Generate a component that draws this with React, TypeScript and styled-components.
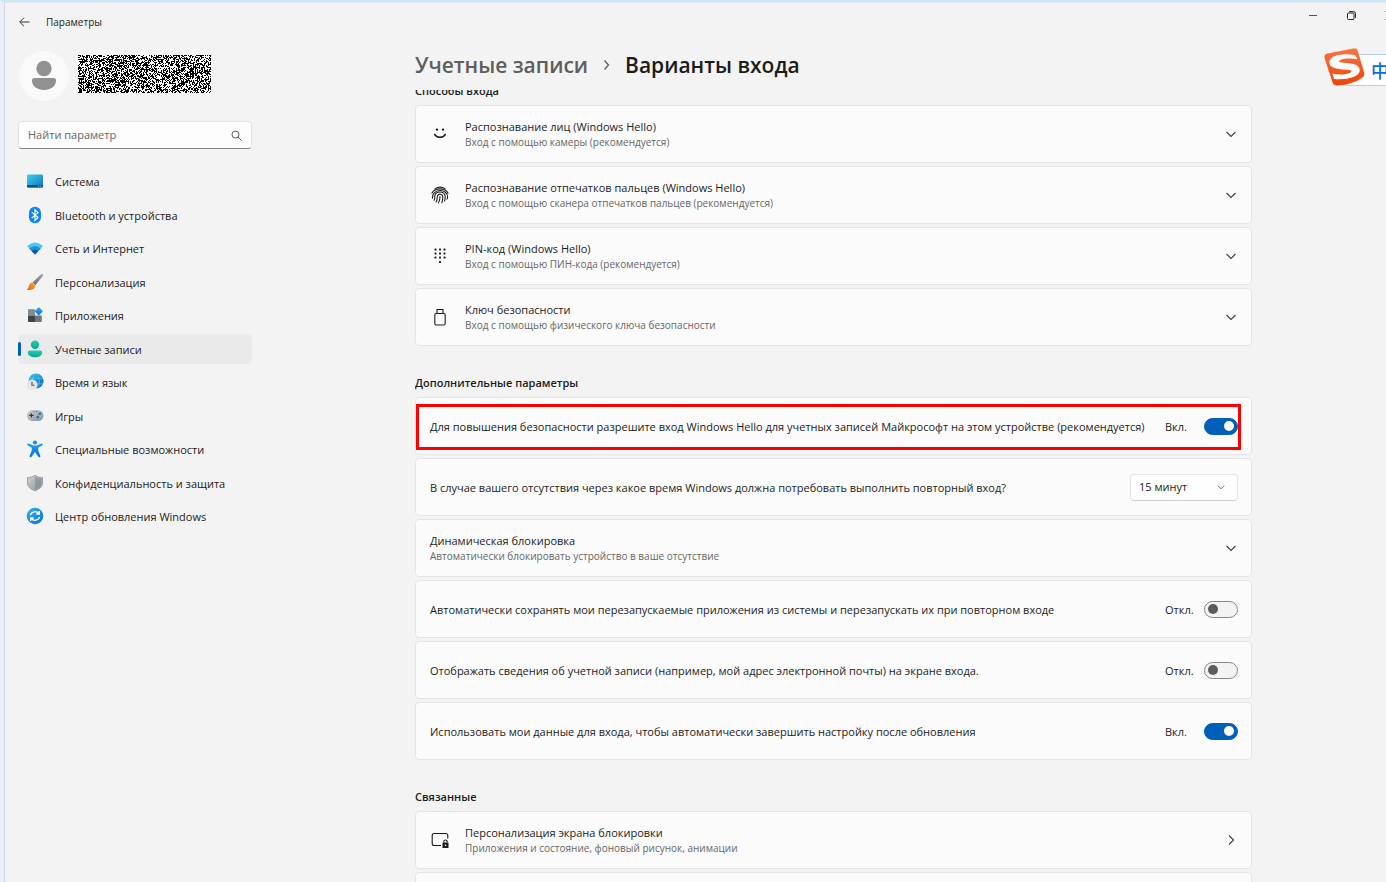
import React, { ReactNode } from 'react';
import styled, { createGlobalStyle } from 'styled-components';

const GlobalStyle = createGlobalStyle`
  *, *::before, *::after { box-sizing: border-box; }
  body { margin: 0; background: #f3f3f3; overflow: hidden; }
  body, button, input, select {
    font-family: "Open Sans", "Noto Sans", sans-serif;
    font-size: 11px;
    line-height: 16px;
    color: #1b1b1b;
  }
  button { background: none; border: 0; padding: 0; margin: 0; text-align: left; }
  h1, h2, p, ul { margin: 0; padding: 0; }
  svg { display: block; flex: none; }
`;

const Window = styled.div`
  position: relative;
  display: flex;
  flex-direction: column;
  height: 100vh;
  overflow: hidden;
  border-top: 2px solid #c9e5f7;
  border-left: 4px solid #ebf0f8;
  background: #f3f3f3;
`;

const Frame = styled.div`
  display: flex;
  flex-direction: column;
  flex: 1;
  min-height: 0;
  border-top: 1px solid #e3e6e9;
  border-left: 1px solid #cdd5e0;
`;

const TitleBar = styled.header`
  display: flex;
  justify-content: space-between;
  flex: none;
  height: 38px;
  overflow: hidden;
`;

const TitleGroup = styled.div`
  display: flex;
  align-items: center;
  gap: 15px;
  padding-left: 13px;
  font-size: 10px;
`;

const Controls = styled.div`
  display: flex;
  height: 24px;
  margin-right: -22px;
`;

const ControlButton = styled.button`
  display: grid;
  place-items: center;
  width: 38px;
`;

const Columns = styled.div`
  display: flex;
  flex: 1;
  min-height: 0;
`;

const Sidebar = styled.aside`
  flex: none;
  width: 247px;
  padding: 10px 0 0 13px;
`;

const Account = styled.div`
  display: flex;
  align-items: center;
  gap: 9px;
  height: 50px;
  padding-left: 1px;
`;

const NamePatch = styled.svg`
  margin-bottom: 4px;
`;

const Search = styled.label`
  display: flex;
  align-items: center;
  height: 28px;
  margin-top: 20px;
  padding: 0 9px;
  border: 1px solid #e3e3e3;
  border-bottom-color: #868686;
  border-radius: 4px;
  background: #fdfdfd;
`;

const SearchInput = styled.input`
  flex: 1;
  min-width: 0;
  padding: 0;
  border: 0;
  outline: 0;
  background: none;
  &::placeholder { color: #666; opacity: 1; }
`;

const NavList = styled.ul`
  display: flex;
  flex-direction: column;
  justify-content: space-between;
  height: 365px;
  margin-top: 17px;
  list-style: none;
`;

const NavLink = styled.a<{ $active?: boolean }>`
  display: flex;
  align-items: center;
  height: 30px;
  padding-left: ${p => (p.$active ? 0 : 3)}px;
  border-radius: 4px;
  color: inherit;
  text-decoration: none;
  background: ${p => (p.$active ? '#eaeaea' : 'transparent')};
  & > svg { margin: 0 11px 0 5px; }
`;

const NavLabel = styled.span`
  padding-top: 2px;
`;

const ActiveMark = styled.span`
  width: 3px;
  height: 14px;
  border-radius: 2px;
  background: #005fb8;
`;

const Main = styled.main`
  display: flex;
  flex-direction: column;
  flex: 1;
  min-width: 0;
  padding: 8px 134px 0 163px;
`;

const Breadcrumb = styled.h1`
  display: flex;
  align-items: center;
  gap: 15px;
  flex: none;
  height: 32px;
  font-size: 21px;
  line-height: 32px;
  font-weight: 600;
`;

const CrumbLink = styled.a`
  color: #5e5e5e;
  text-decoration: none;
`;

const Scroller = styled.div`
  flex: 1;
  min-height: 0;
  margin-top: 9px;
  overflow: hidden;
`;

const ScrolledContent = styled.div`
  margin-top: -7px;
`;

const Section = styled.section`
  margin-bottom: 29px;
`;

const SectionTitle = styled.h2`
  padding-bottom: 6px;
  font-size: 11px;
  line-height: 16px;
  font-weight: 600;
`;

const CardList = styled.div`
  display: flex;
  flex-direction: column;
  gap: 3px;
`;

const cardStyles = `
  position: relative;
  display: flex;
  align-items: center;
  width: 100%;
  min-height: 58px;
  padding: 0 13px 0 14px;
  border: 1px solid #e5e5e5;
  border-radius: 4px;
  background: #fbfbfb;
`;
const Card = styled.div`${cardStyles}`;
const CardButton = styled.button`${cardStyles}`;

const CardIcon = styled.span`
  display: grid;
  place-items: center;
  width: 20px;
  margin-right: 15px;
`;

const CardText = styled.span`
  display: flex;
  flex-direction: column;
  flex: 1;
  min-width: 0;
`;

const Title = styled.span`
  line-height: 16px;
`;

const Subtitle = styled.span`
  font-size: 10px;
  line-height: 14px;
  color: #666;
`;

const CardLabel = styled.label`
  flex: 1;
  padding-top: 2px;
  white-space: nowrap;
`;

const Status = styled.span`
  width: 39px;
  padding-top: 2px;
`;

const Toggle = styled.input`
  appearance: none;
  display: flex;
  align-items: center;
  width: 34px;
  height: 17px;
  margin: 0;
  padding: 0 3px;
  border: 1px solid #868686;
  border-radius: 9px;
  background: #f3f3f3;
  &::before {
    content: "";
    width: 10px;
    height: 10px;
    border-radius: 50%;
    background: #5c5c5c;
  }
  &:checked {
    justify-content: flex-end;
    border-color: #005fb8;
    background: #005fb8;
  }
  &:checked::before { background: #fff; }
`;

const SelectBox = styled.span`
  display: grid;
  align-items: center;
  width: 108px;
  & > * { grid-area: 1 / 1; }
  & > svg { justify-self: end; margin-right: 12px; pointer-events: none; }
`;

const Select = styled.select`
  appearance: none;
  width: 100%;
  height: 27px;
  padding: 0 8px;
  border: 1px solid #e3e3e3;
  border-bottom-color: #cfcfcf;
  border-radius: 4px;
  background: #fefefe;
`;

const Highlight = styled.span`
  position: absolute;
  inset: 6px 10px 4px 0;
  border: 3px solid #f00;
  pointer-events: none;
`;

const InputMethod = styled.div`
  position: absolute;
  top: 46px;
  right: 0;
  display: flex;
  align-items: flex-end;
  width: 62px;
  height: 38px;
  overflow: hidden;
`;

const InputBar = styled.div`
  flex: none;
  width: 60px;
  height: 32px;
  margin-left: -20px;
  padding-left: 25px;
  border: 1px solid #b4cbea;
  background: #fff;
  color: #0a6cd6;
  font: 500 18px/30px "Noto Sans CJK SC", sans-serif;
`;

const SogouLogo = styled.svg`
  position: relative;
  z-index: 1;
`;

const Chevron = ({ size = 10, right = false }: { size?: number; right?: boolean }) => (
  <svg width={size + 4} height={size + 4} viewBox="0 0 14 14" fill="none" stroke="#3c3c3c" strokeWidth="1.1">
    <path d={right ? 'M5 2.5 9.5 7 5 11.5' : 'M2.5 5 7 9.5 11.5 5'} />
  </svg>
);

/* Redacted account name: a fixed field of black and white cells */
const redactedCells = (() => {
  let seed = 9127;
  let d = '';
  for (let y = 0; y < 38; y++) {
    for (let x = 0; x < 133; x++) {
      seed = (seed * 1103515245 + 12345) % 2147483648;
      if ((seed >> 12) % 100 < 53) d += `M${x} ${y}h1v1h-1z`;
    }
  }
  return d;
})();

const RedactedName = () => (
  <NamePatch width="133" height="38" viewBox="0 0 133 38" shapeRendering="crispEdges">
    <rect width="133" height="38" fill="#fff" />
    <path d={redactedCells} />
  </NamePatch>
);

const Icon = ({ children }: { children: ReactNode }) => (
  <svg width="18" height="18" viewBox="0 0 18 18" fill="none">{children}</svg>
);

const HiddenDefs = styled.svg`
  position: absolute;
`;

const Gradients = () => (
  <HiddenDefs width="0" height="0">
    <defs>
      <linearGradient id="screen" x1="0" y1="0" x2="1" y2="1"><stop stopColor="#3fd3ea" /><stop offset="1" stopColor="#0b72c0" /></linearGradient>
      <linearGradient id="handle" x1="1" y1="0" x2="0" y2="1"><stop stopColor="#a5abb2" /><stop offset="1" stopColor="#646b73" /></linearGradient>
      <linearGradient id="bristle" x1="1" y1="0" x2="0" y2="1"><stop stopColor="#ffb52e" /><stop offset="1" stopColor="#e55b16" /></linearGradient>
      <linearGradient id="diamond" x1="0" y1="0" x2="1" y2="1"><stop stopColor="#2fb4f2" /><stop offset="1" stopColor="#0a70d0" /></linearGradient>
      <linearGradient id="person" x1="0" y1="0" x2="0" y2="1"><stop stopColor="#27cdb0" /><stop offset="1" stopColor="#0fa48f" /></linearGradient>
      <linearGradient id="globe" x1="0" y1="0" x2="1" y2="1"><stop stopColor="#2fc5ee" /><stop offset="1" stopColor="#0a66b8" /></linearGradient>
      <linearGradient id="metal" x1="0" y1="0" x2="1" y2="1"><stop stopColor="#cfd3d7" /><stop offset="1" stopColor="#8b9198" /></linearGradient>
      <linearGradient id="human" x1="0" y1="0" x2="0" y2="1"><stop stopColor="#1fa3ec" /><stop offset="1" stopColor="#0871cc" /></linearGradient>
      <linearGradient id="sogou" x1="0" y1="0" x2="0" y2="1"><stop stopColor="#fb7440" /><stop offset="1" stopColor="#ee4309" /></linearGradient>
    </defs>
  </HiddenDefs>
);

const navItems: { label: string; icon: ReactNode; active?: boolean }[] = [
  { label: 'Система', icon: <>
    <rect x="1" y="2.500" width="16" height="13" rx="1.2" fill="url(#screen)" />
    <path d="M1 12.900h16v1.400q0 1.200-1.200 1.200H2.200Q1 15.500 1 14.300z" fill="#0b4f86" />
    <path d="M12.200 14.200h1m1 0h1" stroke="#bfe6fa" strokeWidth=".9" />
  </> },
  { label: 'Bluetooth и устройства', icon: <>
    <rect x="3" y="0.800" width="12" height="16.500" rx="6" fill="#0a84f8" />
    <path d="M5.800 6.100 12 11.600 9 14.300V3.800L12 6.600 5.800 12" stroke="#fff" strokeWidth="1.200" />
  </> },
  { label: 'Сеть и Интернет', icon: <>
    <path d="M1 7.100Q9 .1 17 7.100L9 15.500z" fill="#47c8f5" />
    <path d="M3.200 9.400Q9 4.400 14.800 9.400L9 15.500z" fill="#1b8fdc" />
    <path d="M5.600 11.900Q9 8.900 12.400 11.900L9 15.500z" fill="#0b57a4" />
  </> },
  { label: 'Персонализация', icon: <>
    <path d="M16.800 1.200c.6.600.2 1.500-.3 2.200L9.300 12.200 6.600 9.600 14.700 1.500c.6-.5 1.500-.9 2.100-.3z" fill="url(#handle)" />
    <path d="M6.300 9.400 9.400 12.500c.3 3.200-3.900 5.200-8.600 4.200 1.700-.9 1.500-2.500 2.200-4.400.6-1.800 1.800-2.900 3.300-2.900z" fill="url(#bristle)" />
  </> },
  { label: 'Приложения', icon: <>
    <path d="M2 3.200h7v6.300H2z" fill="#858b92" />
    <path d="M2 9.500h7v6.500H3q-1 0-1-1z" fill="#3f454c" />
    <path d="M9 9.500h6.800V15q0 1-1 1H9z" fill="#6f767e" />
    <rect x="9.800" y="2.200" width="6" height="6" rx=".8" transform="rotate(45 12.800 5.200)" fill="url(#diamond)" />
  </> },
  { label: 'Учетные записи', active: true, icon: <>
    <circle cx="9" cy="4.700" r="4.200" fill="url(#person)" />
    <path d="M3.700 10.500h10.600q1.900 0 1.900 1.900c0 3-3.200 4.800-7.200 4.800s-7.200-1.800-7.200-4.800q0-1.900 1.900-1.900z" fill="url(#person)" />
  </> },
  { label: 'Время и язык', icon: <>
    <circle cx="10" cy="8" r="7.600" fill="url(#globe)" />
    <path d="M3 5.200h14M3 10.800h14M10 .4c-4.500 4-4.500 11 0 15.200M10 .4c4.500 4 4.500 11 0 15.200" stroke="#8ee2fb" strokeWidth=".7" opacity=".6" />
    <circle cx="6.200" cy="11.700" r="5.300" fill="#e4e6e9" />
    <path d="M6 8.700v3.600h2.500" stroke="#4a5058" strokeWidth="1.100" />
  </> },
  { label: 'Игры', icon: <>
    <rect x="1" y="3" width="16.500" height="11" rx="5.500" fill="url(#metal)" />
    <path d="M3.200 8.400h4.400M5.400 6.200v4.400" stroke="#343a42" strokeWidth="1.200" />
    <circle cx="13.800" cy="6.700" r="1.300" fill="#0b74ce" /><circle cx="11.800" cy="10.100" r="1.300" fill="#0b74ce" />
    <path d="M7.500 4.600h1m1.500 0h1" stroke="#4a5058" strokeWidth=".8" />
  </> },
  { label: 'Специальные возможности', icon: <>
    <circle cx="9" cy="2.500" r="2.100" fill="#1690e4" />
    <path d="M2.700 3.500 7.200 5.400h3.600l4.500-1.900q1.300-.2 1.500.8 0 .9-.8 1.300L12.200 7.700v2.900l2.200 5.300q.1 1.200-.8 1.400-1 .100-1.400-.7L9 12l-3.200 4.600q-.4.800-1.400.7-.9-.2-.8-1.400l2.200-5.300V7.700L2 5.600q-.8-.4-.8-1.300.2-1 1.500-.8z" fill="url(#human)" />
  </> },
  { label: 'Конфиденциальность и защита', icon: <>
    <path d="M9 1.200c2.300 1.800 4.800 2.300 7.500 2.300v5.300c0 3.800-2.800 6.300-7.500 8-4.700-1.700-7.500-4.200-7.500-8V3.500C4.200 3.500 6.700 3 9 1.200z" fill="url(#metal)" stroke="#8a9097" strokeWidth=".8" />
    <path d="M9 2.600v12.900c3.900-1.500 6.200-3.500 6.200-6.700V4.700C12.800 4.500 10.900 3.900 9 2.600z" fill="#80868d" opacity=".55" />
  </> },
  { label: 'Центр обновления Windows', icon: <>
    <circle cx="9" cy="9" r="8.300" fill="url(#diamond)" />
    <path d="M4.400 8.100C5.500 4.300 10.500 3.500 13 6.700M13.300 3.900v3.100h-3.100M13.600 9.900c-1.100 3.800-6.100 4.600-8.600 1.400M4.700 14.100v-3.100h3.100" stroke="#fff" strokeWidth="1.300" />
  </> },
];

const FaceIcon = () => (
  <svg width="16" height="16" viewBox="0 0 16 16" fill="none">
    <circle cx="5" cy="3.600" r="1.200" fill="#1b1b1b" /><circle cx="11" cy="3.600" r="1.200" fill="#1b1b1b" />
    <path d="M2.700 8.300c2.300 4 8.300 4 10.600 0" stroke="#1b1b1b" strokeWidth="1.500" strokeLinecap="round" />
  </svg>
);

const FingerprintIcon = () => (
  <svg width="18" height="18" viewBox="0 0 18 18" fill="none" stroke="#1b1b1b" strokeWidth="1.050" strokeLinecap="round">
    <path d="M4 2.600Q9-.4 14 2.600" />
    <path d="M.9 7.300C3.500 1.400 14.500 1.400 17.100 7.300" />
    <path d="M1.400 12.200C.8 2.400 16.500 1.800 16.600 11.200q0 1.300-.7 1.900" />
    <path d="M3 14.300c1.200-1.500.6-2.800.8-4.200C4.300 4.700 13.600 4.600 14.200 10.300q0 2.700-.6 4.700" />
    <path d="M5 16c1.600-2 1-3.800 1.300-5.700.6-3 5.200-2.800 5.500.2q.1 3.300-1 6.200" />
    <path d="M7.400 16.900c1.700-2.200 1.600-4.300 1.600-6.500" />
  </svg>
);

const PinIcon = () => (
  <svg width="18" height="18" viewBox="0 0 18 18" fill="#1b1b1b">
    {[2, 6, 10].flatMap(y => [4, 8.500, 13].map(x => <rect key={`${x}-${y}`} x={x - .5} y={y - .5} width="2" height="2" rx=".6" />))}
    <rect x="8" y="14" width="2" height="2" rx=".6" />
  </svg>
);

const KeyIcon = () => (
  <svg width="18" height="18" viewBox="0 0 18 18" fill="none" stroke="#1b1b1b" strokeWidth="1.100">
    <path d="M6 5.500V1.500h6v4" /><rect x="3.800" y="5.500" width="10.400" height="11.500" rx="1.600" />
  </svg>
);

const LockScreenIcon = () => (
  <svg width="18" height="18" viewBox="0 0 18 18" fill="none" stroke="#1b1b1b" strokeWidth="1.100">
    <path d="M10 14.500H3.200q-2 0-2-2V4.500q0-2 2-2h11.600q2 0 2 2v3" />
    <rect x="11.500" y="11.500" width="6" height="5.500" rx=".6" fill="#1b1b1b" stroke="none" />
    <path d="M12.800 11.500v-1q0-1.500 1.700-1.500t1.700 1.500v1" />
    <circle cx="14.500" cy="14.200" r=".8" fill="#fff" stroke="none" />
  </svg>
);

const ExpandCard = ({ icon, title, subtitle, link }: { icon?: ReactNode; title: string; subtitle: string; link?: boolean }) => (
  <CardButton type="button">
    {icon && <CardIcon>{icon}</CardIcon>}
    <CardText><Title>{title}</Title><Subtitle>{subtitle}</Subtitle></CardText>
    <Chevron right={link} />
  </CardButton>
);

const ToggleCard = ({ id, label, on, highlighted }: { id: string; label: string; on?: boolean; highlighted?: boolean }) => (
  <Card>
    <CardLabel htmlFor={id}>{label}</CardLabel>
    <Status>{on ? 'Вкл.' : 'Откл.'}</Status>
    <Toggle id={id} type="checkbox" role="switch" defaultChecked={on} />
    {highlighted && <Highlight />}
  </Card>
);

export default function App() {
  return (
    <>
      <GlobalStyle />
      <Gradients />
      <Window>
        <Frame>
          <TitleBar>
            <TitleGroup>
              <button type="button" aria-label="Назад">
                <svg width="13" height="12" viewBox="0 0 13 12" fill="none" stroke="#333"><path d="M11.500 6H2M6 1.700 1.700 6 6 10.300" /></svg>
              </button>
              <span>Параметры</span>
            </TitleGroup>
            <Controls>
              <ControlButton type="button" aria-label="Свернуть">
                <svg width="8" height="8" viewBox="0 0 8 8" stroke="#555"><path d="M0 4.500h8" /></svg>
              </ControlButton>
              <ControlButton type="button" aria-label="Восстановить">
                <svg width="9" height="9" viewBox="0 0 9 9" fill="none" stroke="#222">
                  <rect x=".5" y="2" width="6.500" height="6.500" rx="1" /><path d="M2.200.6h4.300q2 0 2 2v4.200" />
                </svg>
              </ControlButton>
              <ControlButton type="button" aria-label="Закрыть">
                <svg width="9" height="9" viewBox="0 0 9 9" stroke="#333"><path d="m.5.5 8 8m0-8-8 8" /></svg>
              </ControlButton>
            </Controls>
          </TitleBar>
          <Columns>
            <Sidebar>
              <Account>
                <svg width="50" height="50" viewBox="0 0 50 50">
                  <circle cx="25" cy="25" r="25" fill="#fafafa" />
                  <circle cx="25" cy="17.500" r="7.700" fill="#919191" />
                  <path d="M15.500 27h19q2.500 0 2.500 2.500c0 6-5.500 9.500-12 9.500s-12-3.500-12-9.500q0-2.500 2.500-2.500z" fill="#919191" />
                </svg>
                <RedactedName />
              </Account>
              <Search>
                <SearchInput type="text" placeholder="Найти параметр" aria-label="Найти параметр" />
                <svg width="11" height="11" viewBox="0 0 11 11" fill="none" stroke="#555">
                  <circle cx="4.500" cy="4.500" r="3.500" /><path d="m7 7 3.500 3.500" />
                </svg>
              </Search>
              <nav>
                <NavList>
                  {navItems.map(({ label, icon, active }) => (
                    <li key={label}>
                      <NavLink href="#" $active={active}>
                        {active && <ActiveMark />}
                        <Icon>{icon}</Icon>
                        <NavLabel>{label}</NavLabel>
                      </NavLink>
                    </li>
                  ))}
                </NavList>
              </nav>
            </Sidebar>
            <Main>
              <Breadcrumb>
                <CrumbLink href="#">Учетные записи</CrumbLink>
                <svg width="7" height="12" viewBox="0 0 7 12" fill="none" stroke="#5e5e5e" strokeWidth="1.300"><path d="M1.500 1.500 5.500 6l-4 4.500" /></svg>
                <span>Варианты входа</span>
              </Breadcrumb>
              <Scroller>
                <ScrolledContent>
                  <Section>
                    <SectionTitle>Способы входа</SectionTitle>
                    <CardList>
                      <ExpandCard icon={<FaceIcon />} title="Распознавание лиц (Windows Hello)" subtitle="Вход с помощью камеры (рекомендуется)" />
                      <ExpandCard icon={<FingerprintIcon />} title="Распознавание отпечатков пальцев (Windows Hello)" subtitle="Вход с помощью сканера отпечатков пальцев (рекомендуется)" />
                      <ExpandCard icon={<PinIcon />} title="PIN-код (Windows Hello)" subtitle="Вход с помощью ПИН-кода (рекомендуется)" />
                      <ExpandCard icon={<KeyIcon />} title="Ключ безопасности" subtitle="Вход с помощью физического ключа безопасности" />
                    </CardList>
                  </Section>
                  <Section>
                    <SectionTitle>Дополнительные параметры</SectionTitle>
                    <CardList>
                      <ToggleCard id="hello-only" label="Для повышения безопасности разрешите вход Windows Hello для учетных записей Майкрософт на этом устройстве (рекомендуется)" on highlighted />
                      <Card>
                        <CardLabel htmlFor="relogin">В случае вашего отсутствия через какое время Windows должна потребовать выполнить повторный вход?</CardLabel>
                        <SelectBox>
                          <Select id="relogin"><option>15 минут</option></Select>
                          <Chevron size={6} />
                        </SelectBox>
                      </Card>
                      <ExpandCard title="Динамическая блокировка" subtitle="Автоматически блокировать устройство в ваше отсутствие" />
                      <ToggleCard id="restart-apps" label="Автоматически сохранять мои перезапускаемые приложения из системы и перезапускать их при повторном входе" />
                      <ToggleCard id="account-details" label="Отображать сведения об учетной записи (например, мой адрес электронной почты) на экране входа." />
                      <ToggleCard id="finish-setup" label="Использовать мои данные для входа, чтобы автоматически завершить настройку после обновления" on />
                    </CardList>
                  </Section>
                  <Section>
                    <SectionTitle>Связанные</SectionTitle>
                    <CardList>
                      <ExpandCard link icon={<LockScreenIcon />} title="Персонализация экрана блокировки" subtitle="Приложения и состояние, фоновый рисунок, анимации" />
                      <Card />
                    </CardList>
                  </Section>
                </ScrolledContent>
              </Scroller>
            </Main>
          </Columns>
        </Frame>
        <InputMethod>
          <SogouLogo width="41" height="38" viewBox="0 0 39 38" preserveAspectRatio="none">
            <path d="M3.500 5.500 28 .4q3-.5 4 2l6.200 22q.8 3-1.500 5-9 7-24 8-3.500.2-4.500-3L.5 10Q-.1 6.300 3.500 5.500z" fill="url(#sogou)" />
            <path d="M29.500 7 32 11.500c-5-1.300-12-1.500-16.500.5-2.500 1.500-.5 2.500 3 2.700 7 .3 15 1.300 15.500 7 .5 7-12 10.500-24.500 9.300L8 25.500c6 1.500 13 1.200 17-.8 2.500-1.700.5-2.700-3.500-2.900C13 21.300 5.200 20 5 14.500 5 7.500 17 4.500 29.500 7z" fill="#fff" />
          </SogouLogo>
          <InputBar>中</InputBar>
        </InputMethod>
      </Window>
    </>
  );
}
